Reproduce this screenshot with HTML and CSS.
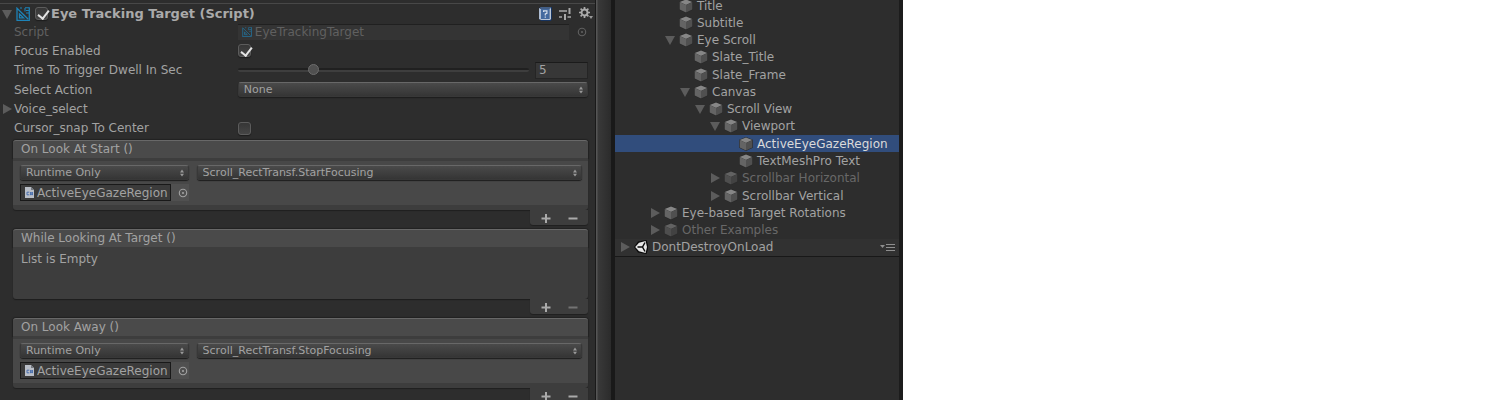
FILE: index.html
```html
<!DOCTYPE html>
<html lang="en">
<head>
<meta charset="utf-8">
<title>Eye Tracking Target</title>
<link rel="stylesheet" href="styles.css">
</head>
<body>
<svg class="defs" aria-hidden="true">
  <symbol id="down" viewBox="0 0 10 10"><path d="M0 1h10L5 10z" fill="#5c5c5c"/></symbol>
  <symbol id="right" viewBox="0 0 10 10"><path d="M1 0v10l9-5z" fill="#5c5c5c"/></symbol>
  <symbol id="cube" viewBox="0 0 14 14"><path d="M7 0l6.800 2.800v8L7 14 .2 10.800v-8z" fill="#262626"/><path d="M7 .5l6.300 2.500L7 6 .7 3z" fill="#868686"/><path d="M.7 3L7 6v7.500L.7 10.500z" fill="#646464"/><path d="M13.300 3L7 6v7.500l6.300-3z" fill="#505050"/></symbol>
  <symbol id="script" viewBox="0 0 14 14"><path d="M1 13.300V1.200L12 12M.4 13.300H13.300V.4M3.500 7v3.800h4z" fill="none" stroke="#1d83b8" stroke-width="1.300"/><path d="M4 1h2M9 .8h4.500M10 3.500h3M10 6h3M9 1v3.500" fill="none" stroke="#1d83b8" stroke-width="1.100"/></symbol>
  <symbol id="target" viewBox="0 0 10 10"><circle cx="5" cy="5" r="3.700" fill="none" stroke="currentColor" stroke-width="1.100"/><circle cx="5" cy="5" r="1.100" fill="currentColor"/></symbol>
  <symbol id="updown" viewBox="0 0 6 8"><path d="M1 3.400h4L3 .6zM1 4.800h4L3 7.600z" fill="#999"/></symbol>
  <symbol id="file" viewBox="0 0 9 11"><path d="M0 0h6l3 3v8H0z" fill="#b9bec7"/><path d="M6 0v3h3z" fill="#74787f"/><path d="M4.300 5.200H2v2.600h2.300M5.700 5v3.200M7.300 5v3.200M5 5.900h3M5 7.300h3" fill="none" stroke="#4169ae" stroke-width=".9"/></symbol>
  <symbol id="plus" viewBox="0 0 10 10"><path d="M5 1v9M.5 5.500h9" stroke="#aaa" stroke-width="2"/></symbol>
  <symbol id="minus" viewBox="0 0 10 10"><path d="M.5 5.500h9" stroke="#aaa" stroke-width="2"/></symbol>
</svg>
<main class="editor">
  <section class="inspector">
    <header class="component">
      <svg class="arrow"><use href="#down"/></svg>
      <svg class="script-icon"><use href="#script"/></svg>
      <label class="component-name"><input class="tick" type="checkbox" checked>Eye Tracking Target (Script)</label>
      <button class="tool" aria-label="Help"><svg width="13" height="14" viewBox="0 0 13 14"><path d="M0 1l2-1h11v12l-1 2H2l-2-2z" fill="#16335f"/><path d="M0 1l2 1v11l-2-1z" fill="#aebdd3"/><path d="M1 .5h11v1H2z" fill="#7189ab"/><path d="M2 2h8.500v10H2z" fill="#446a9f"/><path d="M10.500 2l1.500-1v11l-1 1H2v-1h8.500z" fill="#b9c6d8"/><path d="M4.600 5V3.800h3.300v2.500L6.300 7v1.500M6.300 9.500v1.300" fill="none" stroke="#d4deea" stroke-width="1.200"/></svg></button>
      <button class="tool" aria-label="Presets"><svg width="13" height="13" viewBox="0 0 13 13"><path d="M0 4h8M0 10h3M8.500 10h3.500" stroke="#a8a8a8" stroke-width="1.500"/><path d="M10.500 1v6M6 7v6" stroke="#a8a8a8" stroke-width="2"/></svg></button>
      <button class="tool" aria-label="Settings"><svg width="14" height="13" viewBox="0 0 14 13"><circle cx="5.500" cy="5.500" r="3" fill="none" stroke="#aaa" stroke-width="1.900"/><path d="M5.500 0v2M5.500 9v2M0 5.500h2M9 5.500h2M1.600 1.600L3 3M8 8l1.400 1.400M9.400 1.600L8 3M3 8L1.600 9.400" stroke="#aaa" stroke-width="1.700"/><path d="M10 9h4l-2 3z" fill="#999"/></svg></button>
    </header>

    <div class="properties">
      <div class="row muted"><label for="scr">Script</label><div class="field"><span class="script-box"><svg class="mini"><use href="#script"/></svg><input id="scr" class="plain" value="EyeTrackingTarget" readonly></span><button class="pick" aria-label="Select script"><svg><use href="#target"/></svg></button></div></div>
      <div class="row"><label for="foc">Focus Enabled</label><div class="field"><input id="foc" class="tick" type="checkbox" checked></div></div>
      <div class="row"><label for="dwell">Time To Trigger Dwell In Sec</label><div class="field slider-field"><input id="dwell" class="slider" type="range" min="0" max="20" step="0.1" value="5"><input class="number" aria-label="Dwell seconds" value="5"></div></div>
      <div class="row"><label for="act">Select Action</label><div class="field"><span class="select"><select id="act"><option>None</option></select><svg><use href="#updown"/></svg></span></div></div>
      <div class="row"><span><svg class="arrow fold"><use href="#right"/></svg>Voice_select</span></div>
      <div class="row"><label for="snap">Cursor_snap To Center</label><div class="field"><input id="snap" class="tick" type="checkbox"></div></div>
    </div>

    <div class="events">
      <section class="event">
        <h2>On Look At Start ()</h2>
        <div class="listener">
          <span class="select"><select aria-label="Call state"><option>Runtime Only</option></select><svg><use href="#updown"/></svg></span>
          <span class="select"><select aria-label="Function"><option>Scroll_RectTransf.StartFocusing</option></select><svg><use href="#updown"/></svg></span>
          <div class="object"><span class="object-box"><svg class="file"><use href="#file"/></svg><input class="plain" aria-label="Object" value="ActiveEyeGazeRegion" readonly></span><button class="pick" aria-label="Select object"><svg><use href="#target"/></svg></button></div>
        </div>
        <div class="tab"><button aria-label="Add"><svg><use href="#plus"/></svg></button><button aria-label="Remove"><svg><use href="#minus"/></svg></button></div>
      </section>
      <section class="event">
        <h2>While Looking At Target ()</h2>
        <p class="empty">List is Empty</p>
        <div class="tab"><button aria-label="Add"><svg><use href="#plus"/></svg></button><button aria-label="Remove" disabled><svg><use href="#minus"/></svg></button></div>
      </section>
      <section class="event">
        <h2>On Look Away ()</h2>
        <div class="listener">
          <span class="select"><select aria-label="Call state"><option>Runtime Only</option></select><svg><use href="#updown"/></svg></span>
          <span class="select"><select aria-label="Function"><option>Scroll_RectTransf.StopFocusing</option></select><svg><use href="#updown"/></svg></span>
          <div class="object"><span class="object-box"><svg class="file"><use href="#file"/></svg><input class="plain" aria-label="Object" value="ActiveEyeGazeRegion" readonly></span><button class="pick" aria-label="Select object"><svg><use href="#target"/></svg></button></div>
        </div>
        <div class="tab"><button aria-label="Add"><svg><use href="#plus"/></svg></button><button aria-label="Remove"><svg><use href="#minus"/></svg></button></div>
      </section>
    </div>
  </section>
  <div class="divider"></div>
  <nav class="hierarchy" aria-label="Hierarchy">
    <ul class="tree">
      <li class="d3"><svg class="arrow"></svg><svg class="cube"><use href="#cube"/></svg>Title</li>
      <li class="d3"><svg class="arrow"></svg><svg class="cube"><use href="#cube"/></svg>Subtitle</li>
      <li class="d3"><svg class="arrow"><use href="#down"/></svg><svg class="cube"><use href="#cube"/></svg>Eye Scroll</li>
      <li class="d4"><svg class="arrow"></svg><svg class="cube"><use href="#cube"/></svg>Slate_Title</li>
      <li class="d4"><svg class="arrow"></svg><svg class="cube"><use href="#cube"/></svg>Slate_Frame</li>
      <li class="d4"><svg class="arrow"><use href="#down"/></svg><svg class="cube"><use href="#cube"/></svg>Canvas</li>
      <li class="d5"><svg class="arrow"><use href="#down"/></svg><svg class="cube"><use href="#cube"/></svg>Scroll View</li>
      <li class="d6"><svg class="arrow"><use href="#down"/></svg><svg class="cube"><use href="#cube"/></svg>Viewport</li>
      <li class="d7 selected"><svg class="arrow"></svg><svg class="cube"><use href="#cube"/></svg>ActiveEyeGazeRegion</li>
      <li class="d7"><svg class="arrow"></svg><svg class="cube"><use href="#cube"/></svg>TextMeshPro Text</li>
      <li class="d6 inactive"><svg class="arrow"><use href="#right"/></svg><svg class="cube"><use href="#cube"/></svg>Scrollbar Horizontal</li>
      <li class="d6"><svg class="arrow"><use href="#right"/></svg><svg class="cube"><use href="#cube"/></svg>Scrollbar Vertical</li>
      <li class="d2"><svg class="arrow"><use href="#right"/></svg><svg class="cube"><use href="#cube"/></svg>Eye-based Target Rotations</li>
      <li class="d2 inactive"><svg class="arrow"><use href="#right"/></svg><svg class="cube"><use href="#cube"/></svg>Other Examples</li>
      <li class="scene"><svg class="arrow"><use href="#right"/></svg><svg class="cube" viewBox="0 0 14 14"><path d="M0 7l4-5.500L12.500 0 14 5v4l-1.500 5L4 12.500z" fill="#0a0a0a"/><path d="M1.200 7L5 2.800 11.600 1 13 7l-1.400 6L5 11.200z" fill="#e6e6e6"/><path d="M3.500 7H8.500L11 2.500M8.500 7L11 11.500" fill="none" stroke="#0a0a0a" stroke-width="1.500"/></svg>DontDestroyOnLoad<button class="menu" aria-label="Scene menu"><svg width="15" height="8" viewBox="0 0 15 8"><path d="M0 2h5L2.500 5z" fill="#8e8e8e"/><path d="M6 1.500h9M6 4.500h9M6 7.500h9" stroke="#8e8e8e"/></svg></button></li>
    </ul>
  </nav>
</main>
</body>
</html>
```
FILE: styles.css
```css
* { box-sizing: border-box; }
body {
  margin: 0;
  background: #fff;
  color: #a2a2a2;
  font: 12px/16px "DejaVu Sans", Verdana, sans-serif;
}
.defs { position: absolute; width: 0; height: 0; }
svg { display: block; flex: none; }
button { padding: 0; border: 0; background: none; color: inherit; }
input, select { font: inherit; color: inherit; margin: 0; }
.editor {
  display: grid;
  grid-template-columns: minmax(0, 595fr) 20px minmax(0, 288fr);
  width: 60.2%;
  height: 100vh;
  overflow: hidden;
  background: #2d2d2d;
}
.inspector { padding: 3px 7px 0 0; overflow: hidden; }
.arrow { width: 10px; height: 10px; }

.component {
  display: flex;
  align-items: center;
  height: 20px;
  margin-right: -7px;
  padding: 0 2px 0 2px;
  border-top: 1px solid #484848;
  font-size: 13px;
  font-weight: bold;
}
.script-icon { width: 14px; height: 14px; margin: 0 5px 0 4px; }
.component-name { display: flex; align-items: center; gap: 3px; flex: 1; color: #aaa; }
.tool { margin-left: 7px; }

.tick {
  appearance: none;
  position: relative;
  width: 13px;
  height: 13px;
  border: 1px solid #5c5c5c;
  border-radius: 3px;
  background: linear-gradient(#363636, #454545);
  box-shadow: 0 1px 1px #1d1d1d;
}
.tick:checked::after {
  content: "";
  position: absolute;
  left: 4px;
  top: 0;
  width: 5px;
  height: 9px;
  border: solid #e4e4e4;
  border-width: 0 2px 2px 0;
  transform: rotate(38deg);
}

.properties { display: grid; grid-auto-rows: 1fr; height: 116px; margin-top: -1px; }
.row {
  display: grid;
  grid-template-columns: 39% minmax(0, 1fr);
  align-items: center;
  padding-left: 14px;
}
.row > span { display: flex; align-items: center; }
.fold { margin: 0 2px 0 -12px; }
.field { display: flex; align-items: center; }
.muted { color: #606060; }
.plain { flex: 1; min-width: 0; padding: 0; border: 0; background: none; outline: 0; }
.script-box {
  display: flex;
  align-items: center;
  gap: 2px;
  flex: 1;
  height: 16px;
  padding-left: 3px;
  border-top: 1px solid #202020;
  background: #343434;
}
.mini { width: 12px; height: 10px; opacity: .65; }
.pick svg { width: 10px; height: 10px; }
.script-box + .pick { margin: 0 1px 0 8px; }

.slider-field { gap: 6px; }
.slider { appearance: none; flex: 1; min-width: 0; height: 16px; background: none; }
.slider::-webkit-slider-runnable-track {
  height: 4px;
  border-top: 2px solid #202020;
  border-radius: 2px;
  background: #3e3e3e;
}
.slider::-webkit-slider-thumb {
  appearance: none;
  width: 11px;
  height: 11px;
  margin-top: -6px;
  border: 1px solid #6c6c6c;
  border-radius: 50%;
  background: #505050;
}
.number {
  width: 53px;
  height: 17px;
  padding: 0 3px;
  border: 1px solid #252525;
  border-top-color: #1b1b1b;
  background: #373737;
}

.select { position: relative; flex: 1; min-width: 0; }
.select select {
  appearance: none;
  display: block;
  width: 100%;
  height: 15px;
  padding: 0 16px 0 5px;
  border: 1px solid #383838;
  border-top-color: #686868;
  border-radius: 3px;
  background: linear-gradient(#4a4a4a, #353535);
  box-shadow: 0 1px 1px #1d1d1d;
  font-size: 11px;
  line-height: 13px;
}
.select svg { position: absolute; right: 4px; top: 4px; width: 6px; height: 8px; }

.events { display: grid; gap: 4px; padding: 2px 0 0 13px; }
.event h2 {
  height: 18px;
  margin: 0;
  padding-left: 8px;
  border-top: 1px solid #686868;
  border-radius: 3px 3px 0 0;
  background: #4a4a4a;
  box-shadow: 0 0 1px 1px #222;
  font-size: 12px;
  font-weight: normal;
}
.listener {
  display: grid;
  grid-template-columns: 30% minmax(0, 1fr);
  gap: 4px 8px;
  padding: 4px 6px 4px 7px;
  border: solid #3d3d3d;
  border-width: 3px 0 5px;
  border-radius: 0 0 3px 3px;
  background: #484848;
  box-shadow: 0 1px 1px #202020;
}
.object { display: flex; align-items: center; height: 17px; background: #505050; }
.object-box {
  display: flex;
  align-items: center;
  gap: 3px;
  flex: 1;
  min-width: 0;
  height: 17px;
  padding: 0 1px 0 4px;
  border: 1px solid #191919;
  background: #3b3b3b;
}
.file { width: 9px; height: 11px; }
.object .pick { padding: 0 1px 0 7px; }
.empty {
  height: 52px;
  margin: 0;
  padding: 4px 8px;
  border-radius: 0 0 3px 3px;
  background: #3d3d3d;
  box-shadow: 0 1px 1px #1d1d1d;
}
.tab {
  position: relative;
  display: flex;
  justify-content: space-around;
  width: 58px;
  height: 15px;
  margin-left: auto;
  padding: 0 2px;
  border-radius: 0 0 3px 3px;
  background: #3d3d3d;
  box-shadow: 0 1px 1px #202020;
}
.tab svg { width: 10px; height: 10px; }
.tab button:disabled { opacity: .5; }

.divider {
  border: solid #191919;
  border-width: 0 4px 0 1px;
  background: linear-gradient(90deg, #555 0 1px, #393939 2px, #2b2b2b);
}
.hierarchy { border-right: 4px solid #1c1c1c; overflow: hidden; }
.tree {
  display: grid;
  grid-auto-rows: 1fr;
  height: 259px;
  margin: -3px 0 0;
  padding: 0;
  list-style: none;
}
.tree li { display: flex; align-items: center; padding: 0 4px 0 5px; white-space: nowrap; }
.tree .arrow { margin-right: 4px; }
.cube { width: 14px; height: 14px; margin-right: 4px; }
.tree .d2 { padding-left: 35px; }
.tree .d3 { padding-left: 50px; }
.tree .d4 { padding-left: 65px; }
.tree .d5 { padding-left: 80px; }
.tree .d6 { padding-left: 95px; }
.tree .d7 { padding-left: 110px; }
.tree .selected { background: #314d7c; color: #dadada; }
.tree .inactive { color: #686868; }
.inactive .cube { opacity: .6; }
.tree .scene { background: #313131; box-shadow: 0 1px 0 #181818; }
.menu { margin-left: auto; }
```
